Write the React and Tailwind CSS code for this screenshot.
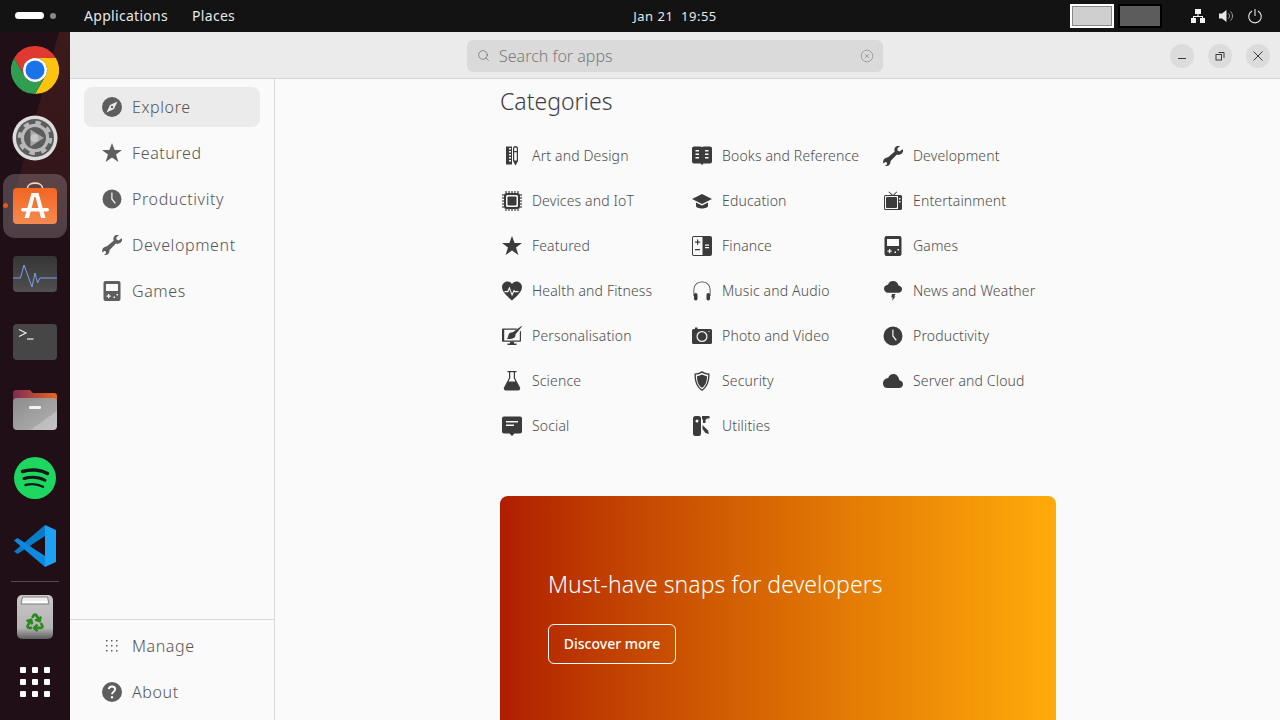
import React from 'react';
import { Search, Recycle } from 'lucide-react';

// category + sidebar glyphs, all on a 20x20 box
const Explore = () => (
  <svg viewBox="0 0 20 20" className="w-5 h-5" fill="currentColor">
    <path fillRule="evenodd" d="M10 0a10 10 0 1 0 0 20a10 10 0 0 0 0-20ZM15.5 4.5L12 12L4.5 15.5L8 8Z" />
    <circle cx="10" cy="10" r="1.2" />
  </svg>
);
const Star = () => (
  <svg viewBox="0 0 20 20" className="w-5 h-5" fill="currentColor">
    <path d="M10 0l2.6 7h7.4l-6 4.5l2.4 7.5L10 14.5L3.600 19L6 11.500L0 7h7.400Z" />
  </svg>
);
const Clock = () => (
  <svg viewBox="0 0 20 20" className="w-5 h-5" fill="currentColor">
    <path fillRule="evenodd" d="M10 .5a9.500 9.500 0 1 0 0 19a9.500 9.500 0 0 0 0-19ZM9.300 3.500h1.200v6.200l3.300 4.300l-1 .8l-3.500-4.500Z" />
  </svg>
);
const Wrench = () => (
  <svg viewBox="0 0 20 20" className="w-5 h-5" fill="currentColor">
    <path d="M19.800 3.200l-3.300 2.300l-2-1l-.1-2.300L17.200 0c-2.300-.6-4.700.3-5.500 2.300c-.5 1.200-.4 2.400.1 3.300L5 11.200C3.500 11.600 2 12 1 13.200c-1 1.200-1 2.700-.6 4.300l1.900-1.600l1.500.6l.3 1.700l-2 1.600c1.700.5 3.500.2 4.500-1.200c.8-1 .9-2.400 1-3.600l6.300-6.500c1.300.6 2.900.5 4.200-.4c1.500-1 2.500-3 2.700-4.900Z" />
  </svg>
);
const Gamepad = () => (
  <svg viewBox="0 0 20 20" className="w-5 h-5" fill="currentColor">
    <path fillRule="evenodd" d="M3.500 0h13A2 2 0 0 1 18.500 2v16a2 2 0 0 1-2 2h-13a2 2 0 0 1-2-2V2a2 2 0 0 1 2-2ZM4 3v7h12V3ZM6 13v1.500H4.500v1.200H6v1.500h1.200v-1.500h1.500v-1.200H7.200V13ZM11.500 15.500v1.500h1.500v-1.500ZM14.500 13v1.500H16V13Z" />
  </svg>
);
const Help = () => (
  <svg viewBox="0 0 20 20" className="w-5 h-5">
    <circle cx="10" cy="10" r="10" fill="currentColor" />
    <path d="M6.800 7.200C7 5.300 8.400 4.500 10 4.500c1.800 0 3.200 1 3.200 2.800c0 2.400-3.200 2.400-3.200 5" fill="none" stroke="white" strokeWidth="1.800" />
    <circle cx="10" cy="15.200" r="1.200" fill="white" />
  </svg>
);
const Dots = () => (
  <svg viewBox="0 0 14 14" className="w-[14px] h-[14px]" fill="currentColor">
    {[1, 6, 11].map((y) => [1, 6, 11].map((x) => <rect key={`${x}-${y}`} x={x} y={y} width="1.500" height="1.500" />))}
  </svg>
);
const ArtDesign = () => (
  <svg viewBox="0 0 20 20" className="w-5 h-5" fill="currentColor">
    <path fillRule="evenodd" d="M4 .5h6v18H4ZM7 2v1.500h2V2ZM7 5v1.500h2V5ZM7 8v1.500h2V8ZM7 11v1.500h2V11ZM7 14v1.500h2V14Z" />
    <path fillRule="evenodd" d="M11 2.500a2.500 2.500 0 0 1 5 0V15l-2.500 4.500L11 15ZM12.200 2.800V5h2.600V2.800a1.300 1.300 0 0 0-2.600 0ZM12.200 6.200v8.300h2.600V6.200Z" />
  </svg>
);
const Book = () => (
  <svg viewBox="0 0 20 20" className="w-5 h-5" fill="currentColor">
    <path fillRule="evenodd" d="M2 .5h6c1 0 1.600.3 2 .8c.4-.5 1-.8 2-.8h6a2 2 0 0 1 2 2v13a2 2 0 0 1-2 2h-6.500l-1.500 1.500l-1.500-1.500H2a2 2 0 0 1-2-2v-13a2 2 0 0 1 2-2ZM3.500 4v1.500h3.500V4ZM3.500 7.500V9h3.500V7.500ZM3.500 11v1.500h3.500V11ZM13 4v1.500h3.500V4ZM13 7.500V9h3.500V7.500ZM13 11v1.500h3.500V11Z" />
  </svg>
);
const Chip = () => (
  <svg viewBox="0 0 20 20" className="w-5 h-5" fill="currentColor">
    <path fillRule="evenodd" d="M4.500 2h11A2.500 2.500 0 0 1 18 4.500v11a2.500 2.500 0 0 1-2.500 2.500h-11A2.500 2.500 0 0 1 2 15.500v-11A2.500 2.500 0 0 1 4.500 2ZM5.500 4A1.500 1.500 0 0 0 4 5.500v9A1.500 1.500 0 0 0 5.500 16h9a1.500 1.500 0 0 0 1.500-1.500v-9A1.500 1.500 0 0 0 14.500 4Z" />
    <rect x="5.500" y="5.500" width="9" height="9" rx="1" />
    {[3.4, 6.4, 9.400, 12.400, 15.400].map((p) => (
      <g key={p}>
        <rect x={p} y="0" width="1.200" height="2" />
        <rect x={p} y="18" width="1.200" height="2" />
        <rect x="0" y={p} width="2" height="1.200" />
        <rect x="18" y={p} width="2" height="1.200" />
      </g>
    ))}
  </svg>
);
const Cap = () => (
  <svg viewBox="0 0 20 20" className="w-5 h-5" fill="currentColor">
    <path d="M10 3L0 8l10 5l10-5Z" />
    <path d="M4 11.500V15c0 1.500 3 2.500 6 2.500s6-1 6-2.500v-3.500l-6 3Z" />
  </svg>
);
const Tv = () => (
  <svg viewBox="0 0 20 20" className="w-5 h-5" fill="currentColor">
    <path d="M6 .5l4 3.500l3.500-3.500l.6.600L11.500 4h-3L5.400 1.100Z" />
    <path fillRule="evenodd" d="M2.500 4h15A1.500 1.500 0 0 1 19 5.500v12a1.500 1.500 0 0 1-1.500 1.500h-15A1.500 1.500 0 0 1 1 17.500v-12A1.500 1.500 0 0 1 2.500 4ZM2.500 5A.5.5 0 0 0 2 5.500v12a.5.5 0 0 0 .5.500h12.500V5ZM16 7v1.500h1.500V7ZM16 10v1.500h1.500V10Z" />
    <rect x="3" y="6" width="11" height="11" rx="1" />
  </svg>
);
const Finance = () => (
  <svg viewBox="0 0 20 20" className="w-5 h-5" fill="currentColor">
    <path fillRule="evenodd" d="M2 0h16a2 2 0 0 1 2 2v16a2 2 0 0 1-2 2H2a2 2 0 0 1-2-2V2a2 2 0 0 1 2-2ZM2 1a1 1 0 0 0-1 1v16a1 1 0 0 0 1 1h8.500V1ZM13 8.500v1.200h4V8.500ZM13 11v1.200h4V11Z" />
    <path d="M5 3.500h1.200V5.500h2v1.200h-2v2H5v-2H3V5.500h2ZM3 13h5v1.200H3Z" />
  </svg>
);
const Heart = () => (
  <svg viewBox="0 0 20 20" className="w-5 h-5" fill="currentColor">
    <path fillRule="evenodd" d="M5.500 .5C2.500.5 0 3 0 6c0 5 6 10 10 13.500C14 16 20 11 20 6c0-3-2.500-5.500-5.500-5.500C12.500.5 11 1.500 10 3C9 1.500 7.500.5 5.500.5ZM7.500 5.500l2.500 7l2-4l1 1.500h3.500v1.300h-4.200l-.2-.4l-2.100 4.300l-2.600-6.900l-1 2.900H2.500V10h2.900Z" />
  </svg>
);
const Headphones = () => (
  <svg viewBox="0 0 20 20" className="w-5 h-5" fill="currentColor">
    <path d="M10 .5c-5 0-8.500 3.500-8.500 8.500v6h.8V9c0-4.600 3.100-7.700 7.700-7.700s7.700 3.100 7.700 7.700v6h.8V9c0-5-3.500-8.500-8.500-8.500Z" />
    <rect x="2" y="12" width="3.500" height="7.500" rx="1.700" />
    <rect x="14.500" y="12" width="3.500" height="7.500" rx="1.700" />
  </svg>
);
const StormCloud = () => (
  <svg viewBox="0 0 20 20" className="w-5 h-5" fill="currentColor">
    <path d="M10 0c-2.500 0-4.500 1.500-5 3.800C2.500 4 1 5.700 1 7.800c0 2.200 1.800 4 4 4h10.500c1.900 0 3.500-1.600 3.500-3.600s-1.500-3.500-3.500-3.700C15 1.800 12.800 0 10 0Z" />
    <path d="M9 13h3.500l-1.500 2.500h1.500L9 20l.8-3.500H8.300Z" />
  </svg>
);
const Monitor = () => (
  <svg viewBox="0 0 20 20" className="w-5 h-5" fill="currentColor">
    <path fillRule="evenodd" d="M1 2.500h14.500L14 3.800H2.200v10.700h15.600V6l1.200-1.500V14.800a1 1 0 0 1-1 1H1a1 1 0 0 1-1-1V3.500a1 1 0 0 1 1-1Z" />
    <path d="M19.500 0l.5.500l-6.500 7.800c.3 2.700-1.500 4.700-5 4.700H4.500c1.500-.8 1.500-2 1.800-3.500c.4-2 2-3.200 4.500-3.200Z" />
    <path d="M8 15.800h4v1.700h2.500V19h-9v-1.500H8Z" />
  </svg>
);
const Camera = () => (
  <svg viewBox="0 0 20 20" className="w-5 h-5" fill="currentColor">
    <path fillRule="evenodd" d="M3 1.500h2.500V3H18.500A1.500 1.500 0 0 1 20 4.500v12a1.500 1.500 0 0 1-1.500 1.500h-17A1.500 1.500 0 0 1 0 16.500v-12A1.500 1.500 0 0 1 1.500 3H3ZM10 5a5.500 5.500 0 1 0 0 11a5.500 5.500 0 0 0 0-11ZM10 6.200a4.300 4.300 0 1 1 0 8.600a4.300 4.300 0 0 1 0-8.600ZM16.500 5v1h1V5Z" />
    <circle cx="10" cy="10.500" r="2.800" />
  </svg>
);
const Flask = () => (
  <svg viewBox="0 0 20 20" className="w-5 h-5" fill="currentColor">
    <path fillRule="evenodd" d="M5.500 0h9v1.200h-1.500V7l5 9.500c.6 1.500-.2 3-2 3H4c-1.800 0-2.600-1.500-2-3L7 7V1.200H5.500ZM8.200 1.200v6l-1.700 3.300h7L11.800 7.200v-6Z" />
  </svg>
);
const Shield = () => (
  <svg viewBox="0 0 20 20" className="w-5 h-5" fill="currentColor">
    <path fillRule="evenodd" d="M10 0c2 1.500 4.500 2.300 7.500 2.500C17.800 10 15.500 16.500 10 20C4.500 16.500 2.200 10 2.500 2.500C5.500 2.300 8 1.500 10 0ZM10 1.700c-1.800 1.100-3.800 1.800-6.200 2.100C3.800 9.800 5.700 15.500 10 18.400c4.300-2.900 6.200-8.600 6.200-14.600c-2.400-.3-4.400-1-6.200-2.100Z" />
    <path d="M10 3.500c1.600.9 3.200 1.400 5 1.700c0 5-1.500 9.500-5 11.500c-3.500-2-5-6.500-5-11.500c1.800-.3 3.400-.8 5-1.700Z" />
  </svg>
);
const Cloud = () => (
  <svg viewBox="0 0 20 20" className="w-5 h-5" fill="currentColor">
    <path d="M10.500 3c-2.500 0-4.500 1.500-5.300 4C2.300 7.300 0 9.500 0 12.500C0 15.500 2 17 4.500 17h11.500c2.300 0 4-1.500 4-3.800c0-2.300-1.600-3.800-3.700-4C15.800 5.600 13.500 3 10.500 3Z" />
  </svg>
);
const Speech = () => (
  <svg viewBox="0 0 20 20" className="w-5 h-5" fill="currentColor">
    <path fillRule="evenodd" d="M2 .5h16a2 2 0 0 1 2 2v13a2 2 0 0 1-2 2h-5.500L10 20l-2.500-2.500H2a2 2 0 0 1-2-2v-13a2 2 0 0 1 2-2ZM4 5v1.500h12V5ZM4 8.500V10h8V8.500Z" />
  </svg>
);
const Utilities = () => (
  <svg viewBox="0 0 20 20" className="w-5 h-5" fill="currentColor">
    <path fillRule="evenodd" d="M3.500 0h3A2.500 2.500 0 0 1 9 2.500v15A2.500 2.500 0 0 1 6.500 20h-3A2.500 2.500 0 0 1 1 17.500v-15A2.500 2.500 0 0 1 3.500 0ZM5 3.500a1.500 1.500 0 1 0 0 3a1.500 1.500 0 0 0 0-3Z" />
    <path d="M10 0h7.500v2.500H15l-1.500 1.500V7H11V4L10 3Z" />
    <path d="M10.500 9l5.500 5.500l1 3.500l-3.500-1L10.500 13Z" />
  </svg>
);

const categories = [
  ['Art and Design', ArtDesign], ['Books and Reference', Book], ['Development', Wrench],
  ['Devices and IoT', Chip], ['Education', Cap], ['Entertainment', Tv],
  ['Featured', Star], ['Finance', Finance], ['Games', Gamepad],
  ['Health and Fitness', Heart], ['Music and Audio', Headphones], ['News and Weather', StormCloud],
  ['Personalisation', Monitor], ['Photo and Video', Camera], ['Productivity', Clock],
  ['Science', Flask], ['Security', Shield], ['Server and Cloud', Cloud],
  ['Social', Speech], ['Utilities', Utilities],
];

const sideItems = [
  { label: 'Explore', icon: Explore, active: true },
  { label: 'Featured', icon: Star },
  { label: 'Productivity', icon: Clock },
  { label: 'Development', icon: Wrench },
  { label: 'Games', icon: Gamepad },
];

const SideRow = ({ label, icon: Icon, active }) => (
  <div className={`h-10 rounded-lg flex items-center pl-[18px] gap-[10px] text-[#555555] text-[16px] font-light tracking-[0.6px] ${active ? 'bg-[#ebebeb]' : ''}`}>
    <span className="w-5 h-5 flex items-center justify-center text-[#5e5e5e]"><Icon /></span>
    <span>{label}</span>
  </div>
);

const ChromeIcon = () => (
  <svg viewBox="0 0 48 48" className="w-12 h-12">
    <path d="M24 12H44.800A24 24 0 0 0 3.200 12L13.600 30A12 12 0 0 1 24 12Z" fill="#e0392f" />
    <path d="M24 12H44.800A24 24 0 0 1 24 48L34.400 30A12 12 0 0 0 24 12Z" fill="#fcc30f" />
    <path d="M34.400 30L24 48A24 24 0 0 1 3.200 12L13.600 30A12 12 0 0 0 34.400 30Z" fill="#2f9e50" />
    <circle cx="24" cy="24" r="12" fill="white" />
    <circle cx="24" cy="24" r="9.500" fill="#1a73e8" />
  </svg>
);
const SettingsIcon = () => (
  <svg viewBox="0 0 46 46" className="w-[46px] h-[46px]">
    <circle cx="23" cy="23" r="22.500" fill="#dcdcdc" />
    <circle cx="23" cy="23" r="19" fill="#5c5c5c" />
    <circle cx="23" cy="23" r="15.500" fill="none" stroke="#b8b8b8" strokeWidth="3.500" strokeDasharray="5.500 6.670" />
    <circle cx="23" cy="23" r="12.500" fill="none" stroke="#b8b8b8" strokeWidth="3.500" />
    <circle cx="23" cy="23" r="10.800" fill="#5c5c5c" />
    <path d="M18.500 14.500L32 23L18.500 31.500Z" fill="#a8a8a8" />
    <circle cx="22.500" cy="23" r="4" fill="#c6c6c6" />
  </svg>
);
const StoreIcon = () => (
  <svg viewBox="0 0 44 48" className="w-11 h-12">
    <defs>
      <linearGradient id="bag" x1="0" y1="0" x2="0" y2="1">
        <stop offset="0" stopColor="#f26522" />
        <stop offset="1" stopColor="#f58a50" />
      </linearGradient>
    </defs>
    <path d="M14.500 8V6c0-6.500 15-6.500 15 0v2" fill="none" stroke="#f7d9b5" strokeWidth="1.600" />
    <rect x="0" y="6" width="44" height="36" rx="4" fill="url(#bag)" />
    <path d="M18.500 11h7l7 25h-4.500L22.500 15h-1L16 36H11.500Z" fill="white" />
    <rect x="8" y="26" width="28" height="3.500" rx="1.700" fill="white" />
  </svg>
);
const MonitorIcon = () => (
  <svg viewBox="0 0 44 36" className="w-11 h-9">
    <defs>
      <linearGradient id="mon" x1="0" y1="0" x2="0" y2="1">
        <stop offset="0" stopColor="#353535" />
        <stop offset="1" stopColor="#4f4f4f" />
      </linearGradient>
    </defs>
    <rect width="44" height="36" rx="4" fill="url(#mon)" />
    <path d="M0 22H7.500L11 9L19 31L22 17L24.500 27L27 22H44" fill="none" stroke="#7ba0ee" strokeWidth="1" />
  </svg>
);
const TerminalIcon = () => (
  <svg viewBox="0 0 44 36" className="w-11 h-9">
    <rect width="44" height="36" rx="4" fill="#464646" />
    <path d="M6 5.500l7 3.500l-7 3.500" fill="none" stroke="#eeeeee" strokeWidth="1.200" />
    <path d="M14 15h6.500" stroke="#eeeeee" strokeWidth="1.200" />
  </svg>
);
const FilesIcon = () => (
  <svg viewBox="0 0 44 40" className="w-11 h-10">
    <defs>
      <linearGradient id="tab" x1="0" y1="0" x2="1" y2="0">
        <stop offset="0" stopColor="#7f2a55" />
        <stop offset="1" stopColor="#e8681f" />
      </linearGradient>
      <linearGradient id="front" x1="0" y1="0" x2="1" y2="1">
        <stop offset="0" stopColor="#8c8c8c" />
        <stop offset="0.7" stopColor="#a8a8a8" />
        <stop offset="0.7" stopColor="#bcbcbc" />
        <stop offset="1" stopColor="#c4c4c4" />
      </linearGradient>
    </defs>
    <path d="M0 3a3 3 0 0 1 3-3h14l3 3h21a3 3 0 0 1 3 3v8H0Z" fill="url(#tab)" />
    <rect x="0" y="8" width="44" height="32" rx="4" fill="url(#front)" />
    <rect x="16" y="16" width="12" height="3" rx="1" fill="#f2f2f2" />
  </svg>
);
const SpotifyIcon = () => (
  <svg viewBox="0 0 42 42" className="w-[42px] h-[42px]">
    <circle cx="21" cy="21" r="21" fill="#1ed760" />
    <path d="M8.500 14.500c8-2.500 18-2 25 2" fill="none" stroke="#171717" strokeWidth="3.500" strokeLinecap="round" />
    <path d="M10 21.500c7-2 15-1.500 21 1.800" fill="none" stroke="#171717" strokeWidth="3" strokeLinecap="round" />
    <path d="M11.500 28c6-1.500 12.500-1 17.500 1.800" fill="none" stroke="#171717" strokeWidth="2.400" strokeLinecap="round" />
  </svg>
);
const VsCodeIcon = () => (
  <svg viewBox="0 0 42 42" className="w-[42px] h-[42px]">
    <path d="M0 26.500L31 0V11L3.500 29Z" fill="#0a7cc7" />
    <path d="M0 15.500L3.500 13L31 31V42Z" fill="#0d8ae0" />
    <path d="M31 0L42 5V37L31 42Z" fill="#1ea0f5" />
  </svg>
);
const TrashIcon = () => (
  <svg viewBox="0 0 36 44" className="w-9 h-11">
    <defs>
      <linearGradient id="can" x1="0" y1="0" x2="0" y2="1">
        <stop offset="0" stopColor="#c8c8c8" />
        <stop offset="0.75" stopColor="#b4b4b4" />
        <stop offset="1" stopColor="#5f5f5f" />
      </linearGradient>
    </defs>
    <rect width="36" height="44" rx="5" fill="url(#can)" />
    <path d="M4 9l1.500-7h25L32 9Z" fill="#ededed" stroke="#6e6e6e" strokeWidth="0.800" />
    <path d="M6 7h24" stroke="#ffffff" strokeWidth="2" />
  </svg>
);
const DockGrid = () => (
  <div className="grid grid-cols-3 gap-[6px]">
    {[0, 1, 2, 3, 4, 5, 6, 7, 8].map((i) => <div key={i} className="w-[6px] h-[6px] rounded-[1px] bg-white" />)}
  </div>
);

const Dock = () => (
  <aside className="relative w-[70px] shrink-0 bg-[#210f17] flex flex-col items-center overflow-hidden">
    {/* wallpaper streak behind the dock */}
    <svg viewBox="0 0 70 208" className="absolute top-0 left-0 w-[70px] h-[208px]">
      <defs>
        <linearGradient id="streak" x1="0" y1="0" x2="0" y2="1">
          <stop offset="0" stopColor="#3c1a1c" />
          <stop offset="0.7" stopColor="#331619" />
          <stop offset="1" stopColor="#210f17" />
        </linearGradient>
      </defs>
      <path d="M59 0H70V208H2Z" fill="url(#streak)" />
    </svg>
    <div className="relative w-full flex flex-col items-center">
      <div className="h-[68px] mt-1 flex items-center justify-center"><ChromeIcon /></div>
      <div className="h-[68px] flex items-center justify-center"><SettingsIcon /></div>
      <div className="relative h-[68px] w-full flex items-center justify-center">
        <div className="w-16 h-16 rounded-xl bg-white/20 flex items-center justify-center"><StoreIcon /></div>
        <div className="absolute left-[3px] top-[31px] w-[5px] h-[5px] rounded-full bg-[#e95420]" />
      </div>
      <div className="h-[68px] flex items-center justify-center"><MonitorIcon /></div>
      <div className="h-[68px] flex items-center justify-center"><TerminalIcon /></div>
      <div className="h-[68px] flex items-center justify-center"><FilesIcon /></div>
      <div className="h-[68px] flex items-center justify-center"><SpotifyIcon /></div>
      <div className="h-[68px] flex items-center justify-center"><VsCodeIcon /></div>
      <div className="w-12 h-px bg-[#5a4a50] mt-[1px]" />
      <div className="relative mt-[13px]">
        <TrashIcon />
        <Recycle size={20} strokeWidth={3.2} className="absolute left-2 top-[17px] text-[#2a8a1e]" />
      </div>
      <div className="mt-[28px]"><DockGrid /></div>
    </div>
  </aside>
);

const TopBar = () => (
  <header className="h-8 shrink-0 bg-[#131313] text-[#e8e8e8] text-[14px] tracking-[0.3px] grid grid-cols-[633px_84px_1fr] items-center leading-[30px] pb-px">
    <div className="flex items-center">
      <div className="ml-[15px] w-[29px] h-[7px] rounded-full bg-white" />
      <div className="ml-[6px] w-[6px] h-[6px] rounded-full bg-[#8a8a8a]" />
      <span className="ml-[28px]">Applications</span>
      <span className="ml-6">Places</span>
    </div>
    <div className="text-[13px] tracking-[0.5px] whitespace-pre text-center">Jan 21  19:55</div>
    <div className="flex items-center justify-end">
      <div className="w-11 h-6 bg-[#cfcfcf] border-2 border-white outline outline-1 -outline-offset-3 outline-[#888888]" />
      <div className="w-11 h-6 ml-1 bg-[#5c5c5c] border-2 border-black" />
      <svg viewBox="0 0 16 16" className="w-4 h-4 ml-[28px]" fill="#f2f2f2">
        <rect x="5" y="1" width="6" height="5" />
        <rect x="1" y="10" width="5" height="5" />
        <rect x="10" y="10" width="5" height="5" />
        <path d="M7.500 6h1v2H13v2h-1V9H4v1H3V8h4.500Z" />
      </svg>
      <svg viewBox="0 0 16 16" className="w-4 h-4 ml-3" fill="none">
        <path d="M1 5.500h3L8.500 2v12L4 10.500H1Z" fill="#e8e8e8" />
        <path d="M10.500 5.500a3.500 3.500 0 0 1 0 5M12.500 3.500a6 6 0 0 1 0 9" stroke="#9a9a9a" strokeWidth="1" />
      </svg>
      <svg viewBox="0 0 16 16" className="w-4 h-4 ml-[13px] mr-[17px]" fill="none" stroke="#e8e8e8" strokeWidth="1.100">
        <path d="M5 3a6.300 6.300 0 1 0 6 0" />
        <path d="M8 1v7" />
      </svg>
    </div>
  </header>
);

const WindowButton = ({ children }) => (
  <div className="w-6 h-6 rounded-full bg-[#dcdcdc] flex items-center justify-center text-[#3a3a3a]">{children}</div>
);

const HeaderBar = () => (
  <div className="h-[47px] shrink-0 bg-[#ebebeb] border-b border-[#d6d6d6] pt-px grid grid-cols-[1fr_416px_1fr] items-center">
    <div />
    <div className="h-8 rounded-md bg-[#dadada] flex items-center pl-[10px] pr-[9px] text-[#7b7b7b] text-[16px] font-light">
      <Search size={13} strokeWidth={1.3} className="text-[#666666] shrink-0" />
      <span className="ml-[9px]">Search for apps</span>
      <svg viewBox="0 0 14 14" className="w-[14px] h-[14px] ml-auto" fill="none" stroke="#a0a0a0">
        <circle cx="7" cy="7" r="5.800" />
        <path d="M5 5l4 4M9 5l-4 4" />
      </svg>
    </div>
    <div className="flex justify-end gap-[14px] pr-[10px]">
      <WindowButton>
        <svg viewBox="0 0 12 12" className="w-3 h-3"><path d="M2 8.500h8" stroke="currentColor" /></svg>
      </WindowButton>
      <WindowButton>
        <svg viewBox="0 0 12 12" className="w-3 h-3" fill="none" stroke="currentColor">
          <rect x="2" y="4.500" width="5.500" height="5.500" />
          <path d="M4.500 2.500h5.500v5.500" />
        </svg>
      </WindowButton>
      <WindowButton>
        <svg viewBox="0 0 12 12" className="w-3 h-3" fill="none" stroke="currentColor"><path d="M1.500 1.500l9 9M10.500 1.500l-9 9" /></svg>
      </WindowButton>
    </div>
  </div>
);

const Sidebar = () => (
  <nav className="w-[205px] shrink-0 border-r border-[#d9d9d9] bg-[#fafafa] flex flex-col">
    <div className="flex-1 px-[14px] pt-2 flex flex-col gap-[6px]">
      {sideItems.map((item) => <SideRow key={item.label} {...item} />)}
    </div>
    <div className="border-t border-[#d9d9d9] px-[14px] pt-[6px] pb-2 flex flex-col gap-[6px]">
      <SideRow label="Manage" icon={Dots} />
      <SideRow label="About" icon={Help} />
    </div>
  </nav>
);

const Main = () => (
  <main className="flex-1 bg-[#fafafa] overflow-hidden pl-[225px] pt-[6px]">
    <h2 className="text-[23px] font-light leading-8 text-[#3d3d3d]">Categories</h2>
    <div className="mt-4 w-[572px] grid grid-cols-[190px_191px_191px] auto-rows-[45px]">
      {categories.map(([label, Icon]) => (
        <div key={label} className="flex items-center text-[14px] font-light tracking-[0.15px] text-[#4d4d4d]">
          <span className="w-5 h-5 ml-[2px] text-[#3b3b3b] shrink-0"><Icon /></span>
          <span className="ml-[10px]">{label}</span>
        </div>
      ))}
    </div>
    <section className="mt-12 w-[556px] h-[300px] rounded-lg bg-gradient-to-r from-[#b01c00] to-[#ffab0a] pl-12 pt-[72px]">
      <h3 className="text-white text-[23px] font-light tracking-[0.05px] leading-8">Must-have snaps for developers</h3>
      <button className="mt-6 w-[128px] h-10 rounded-md border border-white text-white text-[14px] font-medium pb-px">Discover more</button>
    </section>
  </main>
);

export default function App() {
  return (
    <div className="w-[1280px] h-[720px] flex flex-col overflow-hidden font-['Noto_Sans',sans-serif]">
      <TopBar />
      <div className="flex-1 min-h-0 flex">
        <Dock />
        <div className="flex-1 min-w-0 flex flex-col">
          <HeaderBar />
          <div className="flex-1 min-h-0 flex">
            <Sidebar />
            <Main />
          </div>
        </div>
      </div>
    </div>
  );
}
